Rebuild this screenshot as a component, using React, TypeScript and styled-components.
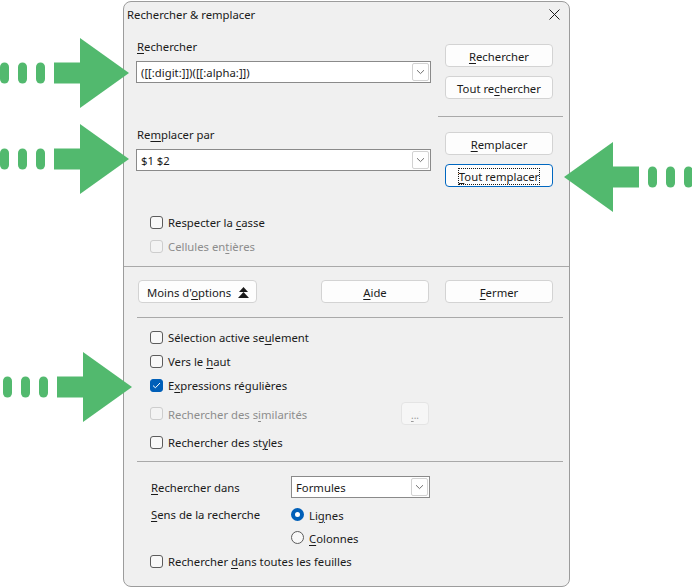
import styled, { createGlobalStyle } from "styled-components";

const GlobalStyle = createGlobalStyle`
  html, body {
    margin: 0;
    padding: 0;
    background: #ffffff;
  }
  body {
    font-family: "Noto Sans", "Liberation Sans", sans-serif;
  }
`;

const Page = styled.div`
  position: relative;
  width: 692px;
  height: 588px;
  box-sizing: border-box;
  padding: 1px 0 0 123px;
  overflow: hidden;
  background: #ffffff;
`;

const Dialog = styled.div`
  width: 447px;
  height: 586px;
  box-sizing: border-box;
  border: 1px solid #9c9c9c;
  border-radius: 8px;
  background: #f0f0f0;
  color: #1a1a1a;
  font-size: 11.3px;
  display: flex;
  flex-direction: column;
  overflow: hidden;
`;

const TitleBar = styled.div`
  height: 25px;
  display: flex;
  align-items: center;
  justify-content: space-between;
  padding: 0 9px 0 3px;
`;

const TopSection = styled.div`
  display: flex;
  padding: 0 6px 0 12px;
`;

const LeftCol = styled.div`
  width: 295px;
  display: flex;
  flex-direction: column;
`;

const RightCol = styled.div`
  width: 125px;
  margin-left: 7px;
  display: flex;
  flex-direction: column;
`;

const FieldLabel = styled.div<{ $top: number }>`
  margin-top: ${(p) => p.$top}px;
  height: 16px;
  line-height: 18px;
  padding-left: 1px;
`;

const Combo = styled.div<{ $w: number; $top?: number }>`
  width: ${(p) => p.$w}px;
  height: 22px;
  margin-top: ${(p) => p.$top ?? 0}px;
  box-sizing: border-box;
  border: 1px solid #8a8a8a;
  background: #ffffff;
  display: flex;
  align-items: center;
  justify-content: space-between;
  padding: 0 1px 0 4px;
`;

const DropButton = styled.span`
  width: 17px;
  height: 18px;
  box-sizing: border-box;
  border: 1px solid #d2d2d2;
  border-radius: 2px;
  display: flex;
  align-items: center;
  justify-content: center;
`;

const Button = styled.button<{
  $top?: number;
  $left?: number;
  $w?: number;
  $focused?: boolean;
  $start?: boolean;
}>`
  width: ${(p) => p.$w ?? 108}px;
  height: 23px;
  margin: ${(p) => p.$top ?? 0}px 0 0 ${(p) => p.$left ?? 0}px;
  box-sizing: border-box;
  border: 1px solid ${(p) => (p.$focused ? "#0067c0" : "#d3d3d3")};
  border-radius: 4px;
  background: #fdfdfd;
  color: #1a1a1a;
  font: inherit;
  padding: ${(p) => (p.$start ? "1px 0 0 8px" : "1px 0 0 0")};
  display: flex;
  align-items: center;
  justify-content: ${(p) => (p.$start ? "flex-start" : "center")};
  gap: 7px;
  flex-shrink: 0;
`;

const FocusText = styled.span`
  outline: 1px dotted #1a1a1a;
  outline-offset: 0px;
  line-height: 15px;
`;

const Divider = styled.div<{ $top: number; $inset?: boolean }>`
  height: 1px;
  margin: ${(p) => p.$top}px ${(p) => (p.$inset ? "6px" : "0")} 0 ${(p) => (p.$inset ? "13px" : "0")};
  background: #a9a9a9;
`;

const SideDivider = styled.div`
  height: 1px;
  margin-top: 17px;
  background: #a9a9a9;
`;

const OptionList = styled.div<{ $top: number }>`
  display: flex;
  flex-direction: column;
  margin-top: ${(p) => p.$top}px;
  padding-left: 26px;
`;

const OptionRow = styled.div<{ $h?: number; $disabled?: boolean }>`
  height: ${(p) => p.$h ?? 24}px;
  display: flex;
  align-items: center;
  gap: 5px;
  color: ${(p) => (p.$disabled ? "#8d8d8d" : "#1a1a1a")};
`;

const SimilarRow = styled.div`
  height: 33px;
  display: grid;
  grid-template-columns: 251px 28px;
  align-items: center;
  color: #8d8d8d;
`;

const Check = styled.span<{ $checked?: boolean; $disabled?: boolean }>`
  width: 13px;
  height: 13px;
  box-sizing: border-box;
  border-radius: 3px;
  border: 1px solid
    ${(p) => (p.$checked ? "#005fb8" : p.$disabled ? "#cdcdcd" : "#5c5c5c")};
  background: ${(p) => (p.$checked ? "#005fb8" : p.$disabled ? "#f3f3f3" : "#f8f8f8")};
  display: flex;
  align-items: center;
  justify-content: center;
  flex-shrink: 0;
`;

const Radio = styled.span<{ $checked?: boolean }>`
  width: 13px;
  height: 13px;
  box-sizing: border-box;
  border-radius: 50%;
  border: ${(p) => (p.$checked ? "4px solid #005fb8" : "1px solid #5c5c5c")};
  background: ${(p) => (p.$checked ? "#ffffff" : "#f8f8f8")};
  flex-shrink: 0;
`;

const SmallButton = styled.span`
  width: 28px;
  height: 23px;
  box-sizing: border-box;
  border: 1px solid #e4e4e4;
  border-radius: 4px;
  background: #f6f6f6;
  color: #9a9a9a;
  font-size: 10px;
  display: flex;
  align-items: flex-end;
  justify-content: center;
  padding-bottom: 4px;
  line-height: 10px;
`;

const ButtonRow = styled.div`
  display: flex;
  margin-top: 13px;
  padding-left: 14px;
`;

const BottomGrid = styled.div`
  display: grid;
  grid-template-columns: 140px 1fr;
  margin-top: 14px;
  padding-left: 27px;
  align-items: center;
`;

const GridLabel = styled.div<{ $h: number; $top?: number }>`
  height: ${(p) => p.$h}px;
  line-height: ${(p) => p.$h + 1}px;
  margin-top: ${(p) => p.$top ?? 0}px;
  align-self: start;
`;

const RadioStack = styled.div`
  display: flex;
  flex-direction: column;
  margin-top: 5px;
`;

const RadioRow = styled.div`
  height: 23px;
  display: flex;
  align-items: center;
  gap: 5px;
`;

const LastRow = styled.div`
  padding-left: 26px;
`;

const Label = styled.span`
  padding-top: 1px;
`;

const U = styled.u`
  text-decoration-thickness: 1px;
  text-underline-offset: 2px;
`;

const Arrow = styled.svg<{ $x: number; $y: number }>`
  position: absolute;
  left: ${(p) => p.$x}px;
  top: ${(p) => p.$y}px;
`;

function Chevron() {
  return (
    <svg width="9" height="6" viewBox="0 0 9 6">
      <path d="M1 1.2 L4.5 4.6 L8 1.2" fill="none" stroke="#707070" strokeWidth="1" />
    </svg>
  );
}

function GreenArrow({ x, y, flip }: { x: number; y: number; flip?: boolean }) {
  return (
    <Arrow $x={x} $y={y} width="130" height="70" viewBox="0 0 130 70">
      <g fill="#52b96e" transform={flip ? "translate(130 0) scale(-1 1)" : undefined}>
        <rect x="0" y="24.5" width="9" height="21" rx="4.5" />
        <rect x="18" y="24.5" width="9" height="21" rx="4.5" />
        <rect x="36" y="24.5" width="9" height="21" rx="4.5" />
        <rect x="54" y="24.5" width="27" height="21" />
        <polygon points="80,0 129,35 80,70" />
      </g>
    </Arrow>
  );
}

export default function App() {
  return (
    <>
      <GlobalStyle />
      <Page>
        <Dialog>
          <TitleBar>
            <span>Rechercher &amp; remplacer</span>
            <svg width="11" height="11" viewBox="0 0 11 11">
              <path d="M0.5 0.5 L10.5 10.5 M10.5 0.5 L0.5 10.5" stroke="#1a1a1a" strokeWidth="1" />
            </svg>
          </TitleBar>

          <TopSection>
            <LeftCol>
              <FieldLabel $top={11}>
                <U>R</U>echercher
              </FieldLabel>
              <Combo $w={295} $top={7}>
                <Label>([[:digit:]])([[:alpha:]])</Label>
                <DropButton>
                  <Chevron />
                </DropButton>
              </Combo>
              <FieldLabel $top={43}>
                Re<U>m</U>placer par
              </FieldLabel>
              <Combo $w={295} $top={7}>
                <Label>$1 $2</Label>
                <DropButton>
                  <Chevron />
                </DropButton>
              </Combo>
            </LeftCol>
            <RightCol>
              <Button $top={17} $left={7}>
                <span>
                  <U>R</U>echercher
                </span>
              </Button>
              <Button $top={9} $left={7}>
                <span>
                  Tout re<U>c</U>hercher
                </span>
              </Button>
              <SideDivider />
              <Button $top={15} $left={7}>
                <span>
                  <U>R</U>emplacer
                </span>
              </Button>
              <Button $top={9} $left={7} $focused>
                <FocusText>
                  <U>T</U>out remplacer
                </FocusText>
              </Button>
            </RightCol>
          </TopSection>

          <OptionList $top={23}>
            <OptionRow>
              <Check />
              <Label>
                Respecter la <U>c</U>asse
              </Label>
            </OptionRow>
            <OptionRow $disabled>
              <Check $disabled />
              <Label>
                Cellules en<U>t</U>ières
              </Label>
            </OptionRow>
          </OptionList>

          <Divider $top={8} />

          <ButtonRow>
            <Button $w={119} $start>
              <span>
                Moins d'<U>o</U>ptions
              </span>
              <svg width="11" height="11" viewBox="0 0 11 11">
                <polygon points="5.5,0 10,5 1,5" fill="#1a1a1a" />
                <polygon points="5.5,5 11,11 0,11" fill="#1a1a1a" />
              </svg>
            </Button>
            <Button $left={64}>
              <span>
                <U>A</U>ide
              </span>
            </Button>
            <Button $left={16}>
              <span>
                <U>F</U>ermer
              </span>
            </Button>
          </ButtonRow>

          <Divider $top={14} $inset />

          <OptionList $top={7}>
            <OptionRow>
              <Check />
              <Label>
                Sélection active se<U>u</U>lement
              </Label>
            </OptionRow>
            <OptionRow>
              <Check />
              <Label>
                Vers le <U>h</U>aut
              </Label>
            </OptionRow>
            <OptionRow>
              <Check $checked>
                <svg width="9" height="7" viewBox="0 0 9 7">
                  <path d="M1 3.6 L3.4 5.8 L8 1" fill="none" stroke="#ffffff" strokeWidth="1" />
                </svg>
              </Check>
              <Label>
                E<U>x</U>pressions régulières
              </Label>
            </OptionRow>
            <SimilarRow>
              <OptionRow $disabled>
                <Check $disabled />
                <Label>
                  Rechercher des s<U>i</U>milarités
                </Label>
              </OptionRow>
              <SmallButton>
                <span>
                  <U>.</U>..
                </span>
              </SmallButton>
            </SimilarRow>
            <OptionRow>
              <Check />
              <Label>
                Rechercher des st<U>y</U>les
              </Label>
            </OptionRow>
          </OptionList>

          <Divider $top={7} $inset />

          <BottomGrid>
            <GridLabel $h={22}>
              <U>R</U>echercher dans
            </GridLabel>
            <Combo $w={139}>
              <Label>Formules</Label>
              <DropButton>
                <Chevron />
              </DropButton>
            </Combo>
            <GridLabel $h={23} $top={5}>
              <U>S</U>ens de la recherche
            </GridLabel>
            <RadioStack>
              <RadioRow>
                <Radio $checked />
                <Label>
                  Li<U>g</U>nes
                </Label>
              </RadioRow>
              <RadioRow>
                <Radio />
                <Label>
                  <U>C</U>olonnes
                </Label>
              </RadioRow>
            </RadioStack>
          </BottomGrid>

          <LastRow>
            <OptionRow>
              <Check />
              <Label>
                Rechercher <U>d</U>ans toutes les feuilles
              </Label>
            </OptionRow>
          </LastRow>
        </Dialog>

        <GreenArrow x={0} y={38} />
        <GreenArrow x={0} y={124} />
        <GreenArrow x={3} y={352} />
        <GreenArrow x={563} y={142} flip />
      </Page>
    </>
  );
}
